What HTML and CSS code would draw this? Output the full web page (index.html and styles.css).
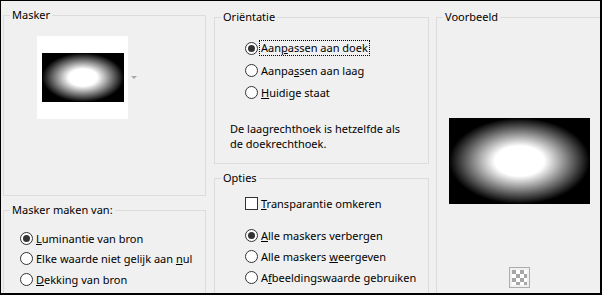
FILE: index.html
```html
<!DOCTYPE html>
<html lang="nl">
<head>
  <meta charset="UTF-8">
  <title>Masker uit afbeelding</title>
  <link rel="stylesheet" href="styles.css">
</head>
<body>
  <div class="dialog">
    <div class="col col-left">
      <fieldset class="group group-mask">
        <legend>Masker</legend>
        <div class="mask-pick">
          <div class="mask-thumb"><div class="mask-img"></div></div>
          <span class="drop-arrow"></span>
        </div>
      </fieldset>
      <fieldset class="group group-source">
        <legend>Masker maken van:</legend>
        <div class="rows rows-source">
          <div class="row"><span class="radio checked"></span><span><u>L</u>uminantie van bron</span></div>
          <div class="row"><span class="radio"></span><span>Elke waarde niet gelijk aan <u>n</u>ul</span></div>
          <div class="row"><span class="radio"></span><span><u>D</u>ekking van bron</span></div>
        </div>
      </fieldset>
    </div>

    <div class="col col-mid">
      <fieldset class="group group-orient">
        <legend>Oriëntatie</legend>
        <div class="rows rows-orient">
          <div class="row"><span class="radio checked"></span><span class="focus">Aan<u>p</u>assen aan doek</span></div>
          <div class="row"><span class="radio"></span><span>Aanpa<u>s</u>sen aan laag</span></div>
          <div class="row"><span class="radio"></span><span><u>H</u>uidige staat</span></div>
        </div>
        <p class="note">De laagrechthoek is hetzelfde als<br>de doekrechthoek.</p>
      </fieldset>
      <fieldset class="group group-options">
        <legend>Opties</legend>
        <div class="rows rows-check">
          <div class="row"><span class="check"></span><span><u>T</u>ransparantie omkeren</span></div>
        </div>
        <div class="rows rows-options">
          <div class="row"><span class="radio checked"></span><span><u>A</u>lle maskers verbergen</span></div>
          <div class="row"><span class="radio"></span><span>Alle maskers <u>w</u>eergeven</span></div>
          <div class="row"><span class="radio"></span><span>A<u>f</u>beeldingswaarde gebruiken</span></div>
        </div>
      </fieldset>
    </div>

    <div class="col col-right">
      <fieldset class="group group-preview">
        <legend>Voorbeeld</legend>
        <div class="preview-img"></div>
        <div class="preview-toggle">
          <svg width="21" height="21" viewBox="0 0 21 21">
            <rect x="0.5" y="0.5" width="20" height="20" fill="#f0f0f0" stroke="#adadad"/>
            <rect x="3" y="3" width="15" height="15" fill="#ffffff"/>
            <g fill="#a6a6a6">
              <rect x="3" y="3" width="4" height="4"/>
              <rect x="11" y="3" width="4" height="4"/>
              <rect x="7" y="7" width="4" height="4"/>
              <rect x="15" y="7" width="3" height="4"/>
              <rect x="3" y="11" width="4" height="4"/>
              <rect x="11" y="11" width="4" height="4"/>
              <rect x="7" y="15" width="4" height="3"/>
              <rect x="15" y="15" width="3" height="3"/>
            </g>
          </svg>
        </div>
      </fieldset>
    </div>
  </div>
</body>
</html>
```

FILE: styles.css
```css
body {
  margin: 0;
  padding: 0;
  background-color: #f0f0f0;
}

.dialog {
  display: flex;
  width: 602px;
  height: 295px;
  box-sizing: border-box;
  border-top: 1px solid #000;
  border-left: 1px solid #000;
  border-right: 2px solid #000;
  border-bottom: 2px solid #000;
  padding: 6px 0 0 2px;
  background-color: #f0f0f0;
  overflow: hidden;
  font-family: "Noto Sans", "Open Sans", sans-serif;
  font-size: 11px;
  color: #000;
}

.col {
  display: flex;
  flex-direction: column;
}

.col-left {
  width: 203px;
}

.col-mid {
  width: 215px;
  margin-left: 8px;
  margin-top: 2px;
}

.col-right {
  flex: 1;
  margin-left: 7px;
  margin-top: 2px;
}

.group {
  flex: none;
  margin: 0;
  padding: 0;
  border: 1px solid #dcdcdc;
  box-sizing: border-box;
  min-width: 0;
}

.group legend {
  margin-left: 6px;
  padding: 0 2px;
  line-height: 16px;
}

.group-mask {
  height: 189px;
}

.mask-pick {
  display: flex;
  align-items: center;
  margin: 13px 0 0 33px;
}

.mask-thumb {
  width: 91px;
  height: 83px;
  box-sizing: border-box;
  padding: 17px 4px 0 5px;
  background-color: #fff;
}

.mask-img {
  width: 82px;
  height: 49px;
  background: radial-gradient(closest-side, #fff 35%, #000 100%);
}

.drop-arrow {
  margin-left: 3px;
  width: 0;
  height: 0;
  border-left: 3px solid transparent;
  border-right: 3px solid transparent;
  border-top: 3px solid #a8a8a8;
}

.group-source {
  margin-top: 6px;
  height: 120px;
}

.rows {
  display: flex;
  flex-direction: column;
}

.row {
  display: flex;
  align-items: center;
  height: 20px;
  white-space: nowrap;
}

.rows-source {
  margin-top: 10px;
  padding-left: 16px;
}

.rows-source .row {
  height: 20.5px;
}

.radio,
.check {
  flex: none;
  width: 13px;
  height: 13px;
  box-sizing: border-box;
  border: 1px solid #333;
  background-color: #fff;
  margin-right: 3px;
}

.radio {
  border-radius: 50%;
  display: flex;
  align-items: center;
  justify-content: center;
}

.radio.checked::after {
  content: "";
  width: 7px;
  height: 7px;
  border-radius: 50%;
  background-color: #333;
}

.focus {
  outline: 1px dotted #000;
  outline-offset: 0;
  padding: 0 1px;
  margin-left: -1px;
  line-height: 14px;
}

.group-orient {
  height: 155px;
}

.rows-orient {
  margin-top: 12px;
  padding-left: 30px;
}

.rows-orient .row {
  height: 22px;
}

.note {
  margin: 18px 0 0 15px;
  line-height: 15px;
}

.group-options {
  margin-top: 6px;
  height: 140px;
}

.rows-check {
  margin-top: 7px;
  padding-left: 30px;
}

.rows-options {
  margin-top: 12px;
  padding-left: 30px;
}

.rows-options .row {
  height: 21px;
}

.group-preview {
  height: 300px;
  border-right: none;
  border-bottom: none;
}

.preview-img {
  width: 141px;
  height: 86px;
  margin: 93px 0 0 12px;
  background: radial-gradient(closest-side, #fff 35%, #000 100%);
}

.preview-toggle {
  display: flex;
  justify-content: center;
  margin-top: 63px;
  padding-left: 2px;
}

.preview-toggle svg {
  display: block;
}
```
